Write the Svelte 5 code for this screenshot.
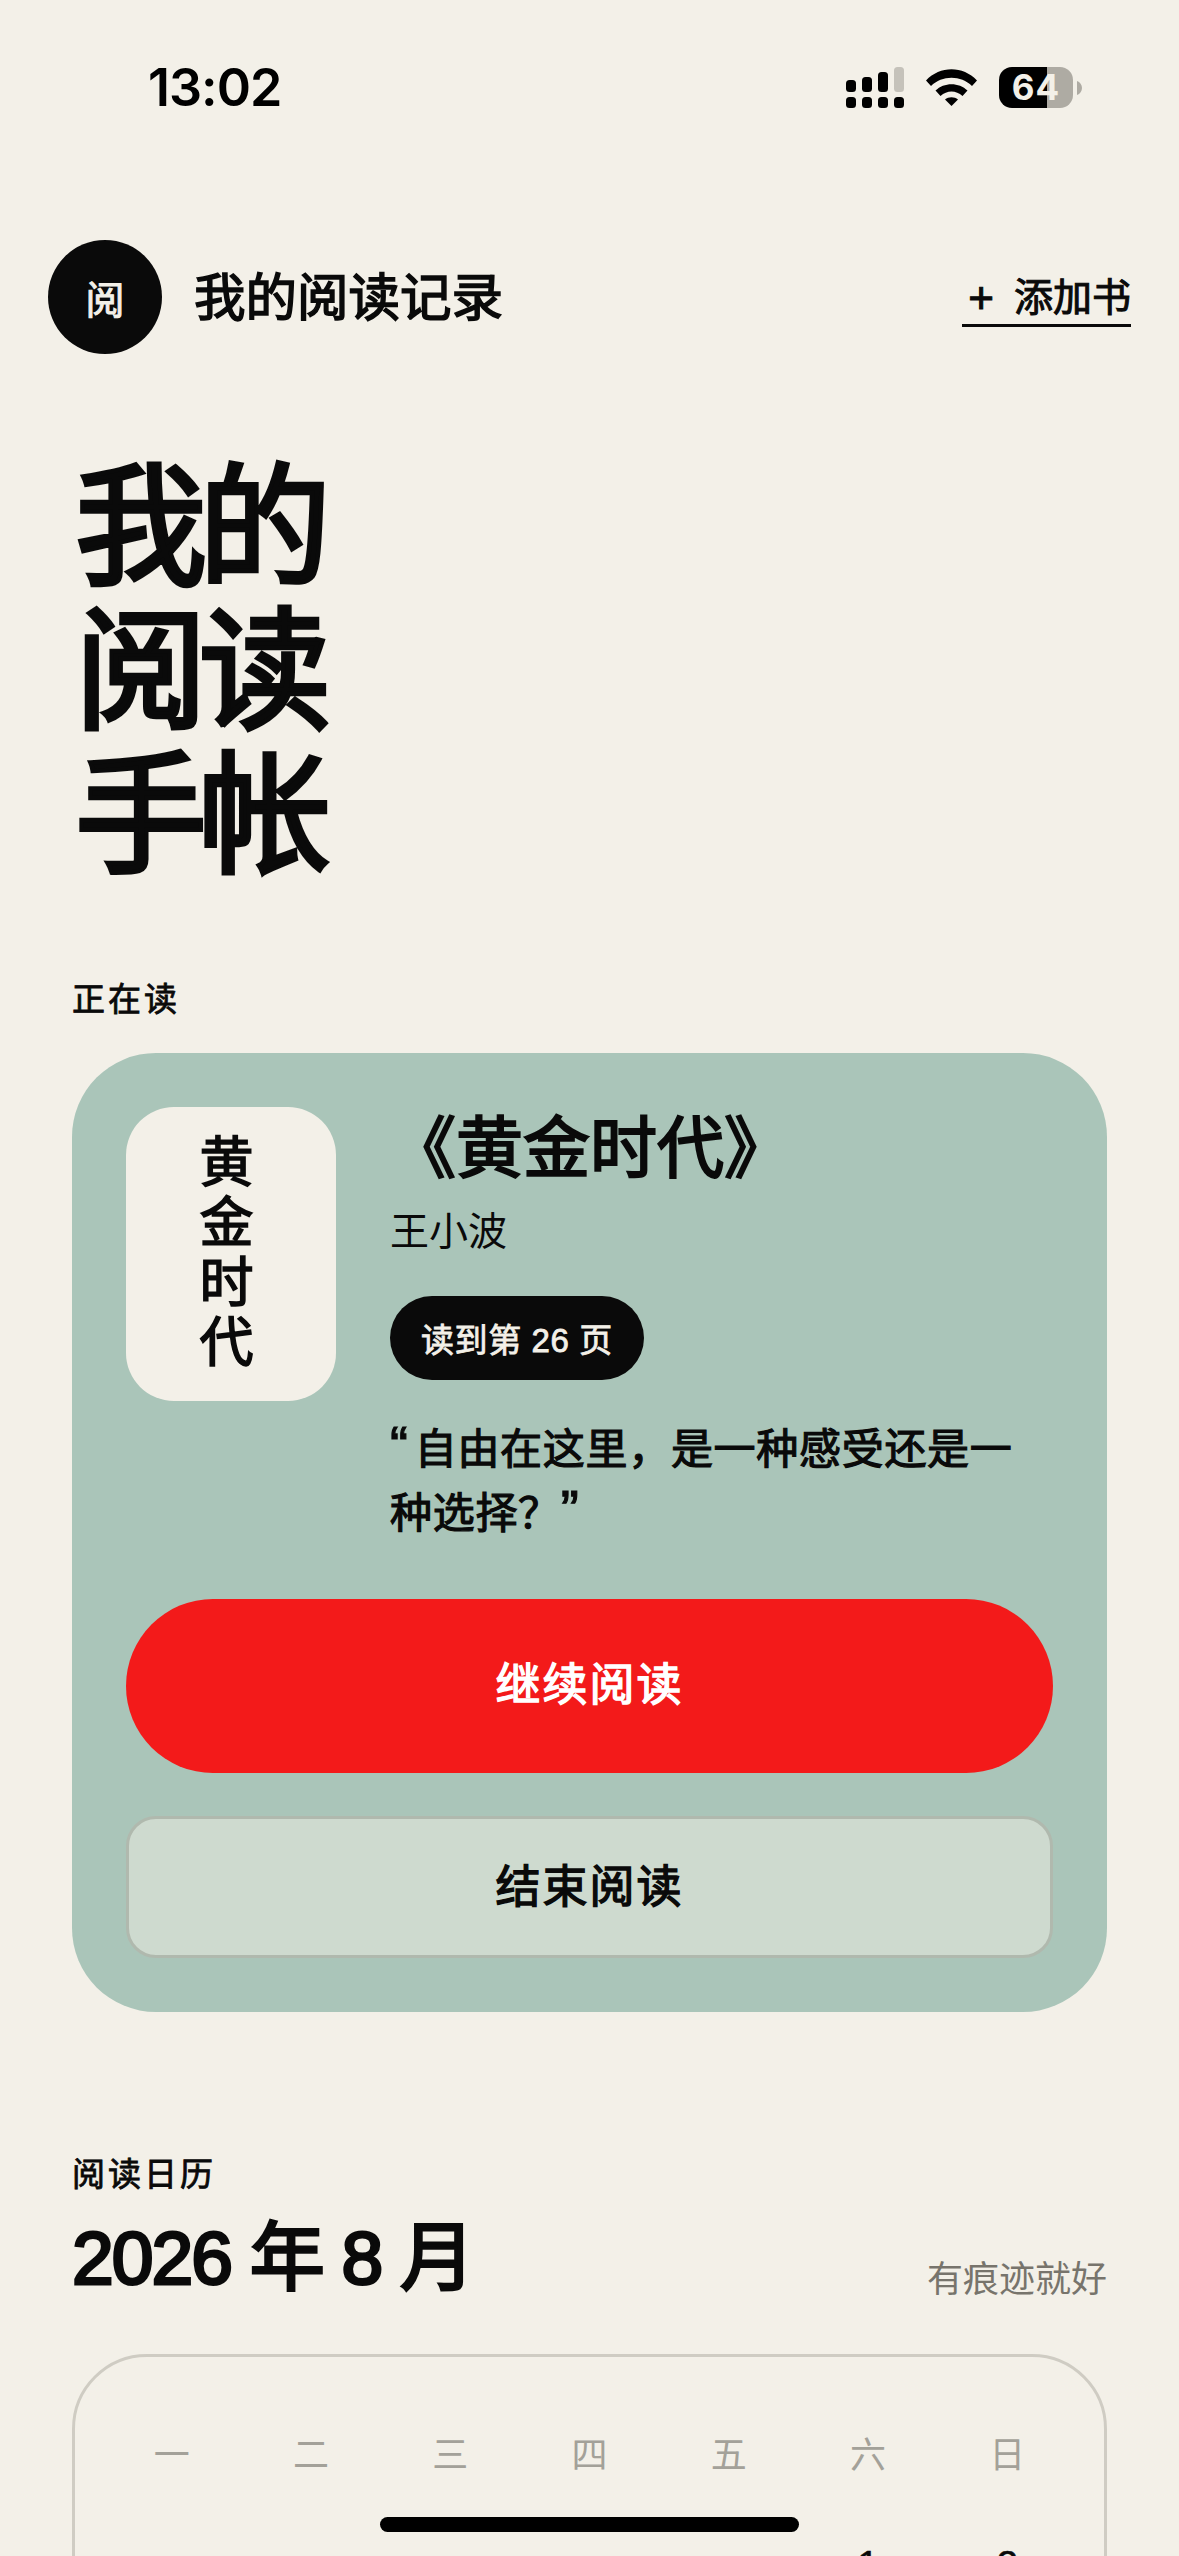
<script>
  const weekdays = ["一", "二", "三", "四", "五", "六", "日"];
  const days = ["", "", "", "", "", "1", "2"];
</script>

<div class="page">
  <div class="status">
    <span class="time">13:02</span>
    <div class="status-icons">
      <svg class="signal" width="58" height="41" viewBox="0 0 58 41">
        <rect x="0" y="13" width="10" height="12" rx="3.5" fill="#000" />
        <rect x="16" y="10" width="10" height="15" rx="3.5" fill="#000" />
        <rect x="32" y="5" width="10" height="20" rx="3.5" fill="#000" />
        <rect x="48" y="0" width="10" height="25" rx="3.5" fill="#c5c2ba" />
        <rect x="0" y="30" width="10" height="11" rx="3.5" fill="#000" />
        <rect x="16" y="30" width="10" height="11" rx="3.5" fill="#000" />
        <rect x="32" y="30" width="10" height="11" rx="3.5" fill="#000" />
        <rect x="48" y="30" width="10" height="11" rx="3.5" fill="#000" />
      </svg>
      <svg class="wifi" width="51" height="37" viewBox="0 0 51 37">
        <path d="M0 11.5 C14 -3.5 37 -3.5 51 11.5 L46 17 C35 6 16 6 5 17 Z" fill="#000" />
        <path d="M9.5 21.5 C18 13 33 13 41.5 21.5 L36.5 27 C30 21 21 21 14.5 27 Z" fill="#000" />
        <path d="M19 30.5 C22.5 27.5 28.5 27.5 32 30.5 L25.5 37 Z" fill="#000" />
      </svg>
      <div class="battery">
        <div class="battery-body">64</div>
        <svg width="5" height="14" viewBox="0 0 5 14"><path d="M0 0 C3 1 5 4 5 7 C5 10 3 13 0 14 Z" fill="#aeaba3" /></svg>
      </div>
    </div>
  </div>

  <header class="top">
    <div class="brand">
      <div class="avatar">阅</div>
      <span class="brand-name">我的阅读记录</span>
    </div>
    <div class="add"><span class="plus">+</span><span>添加书</span></div>
  </header>

  <h1 class="hero">我的<br />阅读<br />手帐</h1>

  <div class="label reading-label">正在读</div>
  <section class="card">
    <div class="book">
      <div class="cover"><span>黄金时代</span></div>
      <div class="info">
        <div class="title">《黄金时代》</div>
        <div class="author">王小波</div>
        <div class="pill">读到第 26 页</div>
        <p class="quote"><span class="mark open">“</span>自由在这里，是一种感受还是一种选择？<span class="mark">”</span></p>
      </div>
    </div>
    <button class="primary">继续阅读</button>
    <button class="secondary">结束阅读</button>
  </section>

  <div class="label cal-label">阅读日历</div>
  <div class="cal-head">
    <div class="month">2026 年 8 月</div>
    <div class="note">有痕迹就好</div>
  </div>
  <section class="calendar">
    <div class="grid">
      {#each weekdays as w}
        <div class="wd">{w}</div>
      {/each}
      {#each days as d}
        <div class="day">{d}</div>
      {/each}
    </div>
  </section>

  <div class="home"></div>
</div>

<style>
  :global(body) {
    margin: 0;
    background: #f3f0e8;
  }
  .page {
    position: relative;
    width: 1179px;
    height: 2556px;
    overflow: hidden;
    background: #f3f0e8;
    color: #0a0a0a;
    font-family: "Liberation Sans", "Noto Sans CJK SC", sans-serif;
  }
  .status {
    display: flex;
    justify-content: space-between;
    align-items: center;
    height: 41px;
    padding: 67px 97px 0 148px;
  }
  .time {
    font-family: Inter, sans-serif;
    font-size: 52px;
    font-weight: 600;
    letter-spacing: -1px;
    color: #000;
  }
  .status-icons {
    display: flex;
    align-items: center;
  }
  .signal {
    margin-right: 22px;
  }
  .wifi {
    margin-right: 22px;
  }
  .battery {
    display: flex;
    align-items: center;
    gap: 4px;
  }
  .battery-body {
    width: 74px;
    height: 41px;
    border-radius: 13px;
    background: linear-gradient(90deg, #000 0 48px, #aeaba3 48px);
    color: #f3f0e8;
    font-family: Inter, sans-serif;
    font-size: 35px;
    font-weight: 700;
    letter-spacing: 1px;
    line-height: 41px;
    text-align: center;
  }
  .top {
    display: flex;
    justify-content: space-between;
    align-items: center;
    margin-top: 132px;
    padding: 0 48px;
  }
  .brand {
    display: flex;
    align-items: center;
    gap: 32px;
  }
  .avatar {
    width: 114px;
    height: 114px;
    border-radius: 50%;
    background: #0a0a0a;
    color: #f3f0e8;
    display: flex;
    align-items: center;
    justify-content: center;
    font-size: 39px;
    -webkit-text-stroke: 1px #f3f0e8;
  }
  .brand-name {
    font-size: 51.5px;
    padding-bottom: 8px;
    -webkit-text-stroke: 1.6px #0a0a0a;
  }
  .add {
    display: flex;
    align-items: center;
    gap: 20px;
    font-size: 39px;
    line-height: 52px;
    padding-left: 6px;
    padding-top: 3px;
    border-bottom: 3px solid #0a0a0a;
    margin-top: 2px;
    -webkit-text-stroke: 1px #0a0a0a;
  }
  .plus {
    font-size: 44px;
  }
  .hero {
    margin: 103px 0 0 75px;
    font-size: 132px;
    line-height: 144px;
    font-weight: 400;
    letter-spacing: -8px;
    -webkit-text-stroke: 4.5px #0a0a0a;
  }
  .label {
    font-size: 33px;
    letter-spacing: 3px;
    line-height: 40px;
    margin-left: 72px;
    -webkit-text-stroke: 0.8px #0a0a0a;
  }
  .reading-label {
    margin-top: 91px;
  }
  .card {
    margin: 33px 72px 0;
    padding: 54px;
    height: 851px;
    border-radius: 84px;
    background: #aac5b9;
    display: flex;
    flex-direction: column;
  }
  .book {
    display: flex;
    gap: 54px;
    height: 492px;
  }
  .cover {
    flex: none;
    width: 210px;
    height: 294px;
    box-sizing: border-box;
    border-radius: 48px;
    background: #f3f0e8;
    display: flex;
    justify-content: center;
    align-items: center;
    padding-right: 18px;
  }
  .cover span {
    writing-mode: vertical-rl;
    text-orientation: upright;
    font-size: 54px;
    line-height: 54px;
    letter-spacing: 6px;
    -webkit-text-stroke: 1.6px #0a0a0a;
  }
  .info {
    flex: 1;
    min-width: 0;
  }
  .title {
    font-size: 67px;
    line-height: 84px;
    margin-left: -1px;
    -webkit-text-stroke: 2.2px #0a0a0a;
  }
  .author {
    font-size: 39px;
    line-height: 50px;
    margin-top: 16px;
  }
  .pill {
    display: inline-flex;
    align-items: center;
    height: 84px;
    padding: 0 31px;
    margin-top: 39px;
    border-radius: 42px;
    background: #0a0a0a;
    color: #f3f0e8;
    font-size: 33px;
    letter-spacing: 0.6px;
    -webkit-text-stroke: 0.8px #f3f0e8;
  }
  .quote {
    margin: 38px 30px 0 0;
    font-size: 42px;
    letter-spacing: 0.7px;
    line-height: 64px;
    -webkit-text-stroke: 1.2px #0a0a0a;
  }
  .mark {
    font-size: 54px;
    line-height: 0;
  }
  .open {
    margin-right: 6px;
  }
  button {
    display: block;
    font-family: inherit;
    font-size: 45px;
    letter-spacing: 2px;
    width: 100%;
    box-sizing: border-box;
    cursor: pointer;
  }
  .primary {
    height: 174px;
    border: 0;
    padding-bottom: 10px;
    border-radius: 87px;
    background: #f31a1a;
    color: #fff;
    -webkit-text-stroke: 1.4px #fff;
  }
  .secondary {
    height: 142px;
    margin-top: 43px;
    padding-bottom: 8px;
    border: 3px solid #b0b9ae;
    border-radius: 30px;
    background: #cedacf;
    color: #0a0a0a;
    -webkit-text-stroke: 1.4px #0a0a0a;
  }
  .cal-label {
    margin-top: 143px;
  }
  .cal-head {
    display: flex;
    justify-content: space-between;
    align-items: flex-end;
    margin: 18px 72px 0;
  }
  .month {
    font-size: 75px;
    letter-spacing: -2px;
    line-height: 90px;
    -webkit-text-stroke: 3px #0a0a0a;
  }
  .note {
    font-size: 36px;
    color: #77746c;
    line-height: 50px;
    margin-bottom: -2px;
  }
  .calendar {
    margin: 51px 72px 0;
    padding: 77px 27px 0;
    border: 3px solid #cfccc3;
    border-radius: 75px;
    height: 400px;
  }
  .grid {
    display: grid;
    grid-template-columns: repeat(7, 1fr);
    row-gap: 63px;
  }
  .wd {
    text-align: center;
    font-size: 36px;
    line-height: 44px;
    color: #a3a199;
  }
  .day {
    text-align: center;
    font-size: 39px;
    line-height: 48px;
    -webkit-text-stroke: 0.6px #0a0a0a;
  }
  .home {
    position: absolute;
    left: 380px;
    top: 2517px;
    width: 419px;
    height: 15px;
    border-radius: 8px;
    background: #000;
  }
</style>
